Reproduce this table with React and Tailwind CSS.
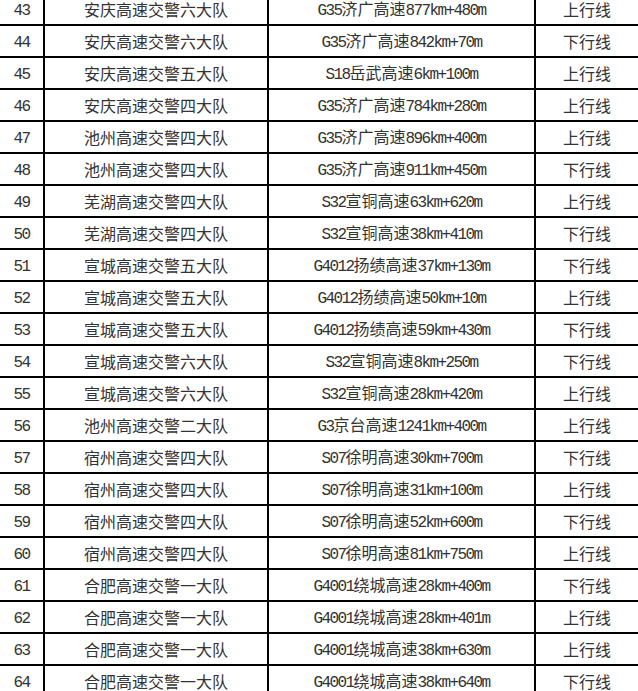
import React from "react";

const rows = [
  ["43", "安庆高速交警六大队", "G35济广高速877km+480m", "上行线"],
  ["44", "安庆高速交警六大队", "G35济广高速842km+70m", "下行线"],
  ["45", "安庆高速交警五大队", "S18岳武高速6km+100m", "上行线"],
  ["46", "安庆高速交警四大队", "G35济广高速784km+280m", "上行线"],
  ["47", "池州高速交警四大队", "G35济广高速896km+400m", "上行线"],
  ["48", "池州高速交警四大队", "G35济广高速911km+450m", "下行线"],
  ["49", "芜湖高速交警四大队", "S32宣铜高速63km+620m", "上行线"],
  ["50", "芜湖高速交警四大队", "S32宣铜高速38km+410m", "下行线"],
  ["51", "宣城高速交警五大队", "G4012扬绩高速37km+130m", "下行线"],
  ["52", "宣城高速交警五大队", "G4012扬绩高速50km+10m", "上行线"],
  ["53", "宣城高速交警五大队", "G4012扬绩高速59km+430m", "下行线"],
  ["54", "宣城高速交警六大队", "S32宣铜高速8km+250m", "下行线"],
  ["55", "宣城高速交警六大队", "S32宣铜高速28km+420m", "上行线"],
  ["56", "池州高速交警二大队", "G3京台高速1241km+400m", "上行线"],
  ["57", "宿州高速交警四大队", "S07徐明高速30km+700m", "下行线"],
  ["58", "宿州高速交警四大队", "S07徐明高速31km+100m", "上行线"],
  ["59", "宿州高速交警四大队", "S07徐明高速52km+600m", "下行线"],
  ["60", "宿州高速交警四大队", "S07徐明高速81km+750m", "上行线"],
  ["61", "合肥高速交警一大队", "G4001绕城高速28km+400m", "下行线"],
  ["62", "合肥高速交警一大队", "G4001绕城高速28km+401m", "上行线"],
  ["63", "合肥高速交警一大队", "G4001绕城高速38km+630m", "上行线"],
  ["64", "合肥高速交警一大队", "G4001绕城高速38km+640m", "下行线"],
];

function Mixed({ text }) {
  const parts = text.match(/[\x00-\x7f]+|[^\x00-\x7f]+/g) || [];
  return (
    <span className="whitespace-nowrap">
      {parts.map((p, i) =>
        /^[\x00-\x7f]+$/.test(p) ? (
          <span
            key={i}
            className="tracking-[-1.6px] [font-family:'Liberation_Mono','DejaVu_Sans_Mono',monospace]"
          >
            {p}
          </span>
        ) : (
          <span key={i}>{p}</span>
        )
      )}
    </span>
  );
}

export default function App() {
  return (
    <div className="h-[691px] w-[638px] overflow-hidden bg-white text-[16px] leading-none text-[#333] [font-family:'Noto_Sans_CJK_SC','Noto_Sans',sans-serif]">
      <div className="-mt-2 border-t-2 border-black">
        {rows.map((r) => (
          <div
            key={r[0]}
            className="grid h-8 grid-cols-[45px_224px_267px_1fr] border-b-2 border-black"
          >
            <div className="flex items-center justify-center border-r-2 border-black">
              <Mixed text={r[0]} />
            </div>
            <div className="flex items-center justify-center border-r-2 border-black">
              <Mixed text={r[1]} />
            </div>
            <div className="flex items-center justify-center border-r-2 border-black">
              <Mixed text={r[2]} />
            </div>
            <div className="flex items-center justify-center">
              <Mixed text={r[3]} />
            </div>
          </div>
        ))}
      </div>
    </div>
  );
}
